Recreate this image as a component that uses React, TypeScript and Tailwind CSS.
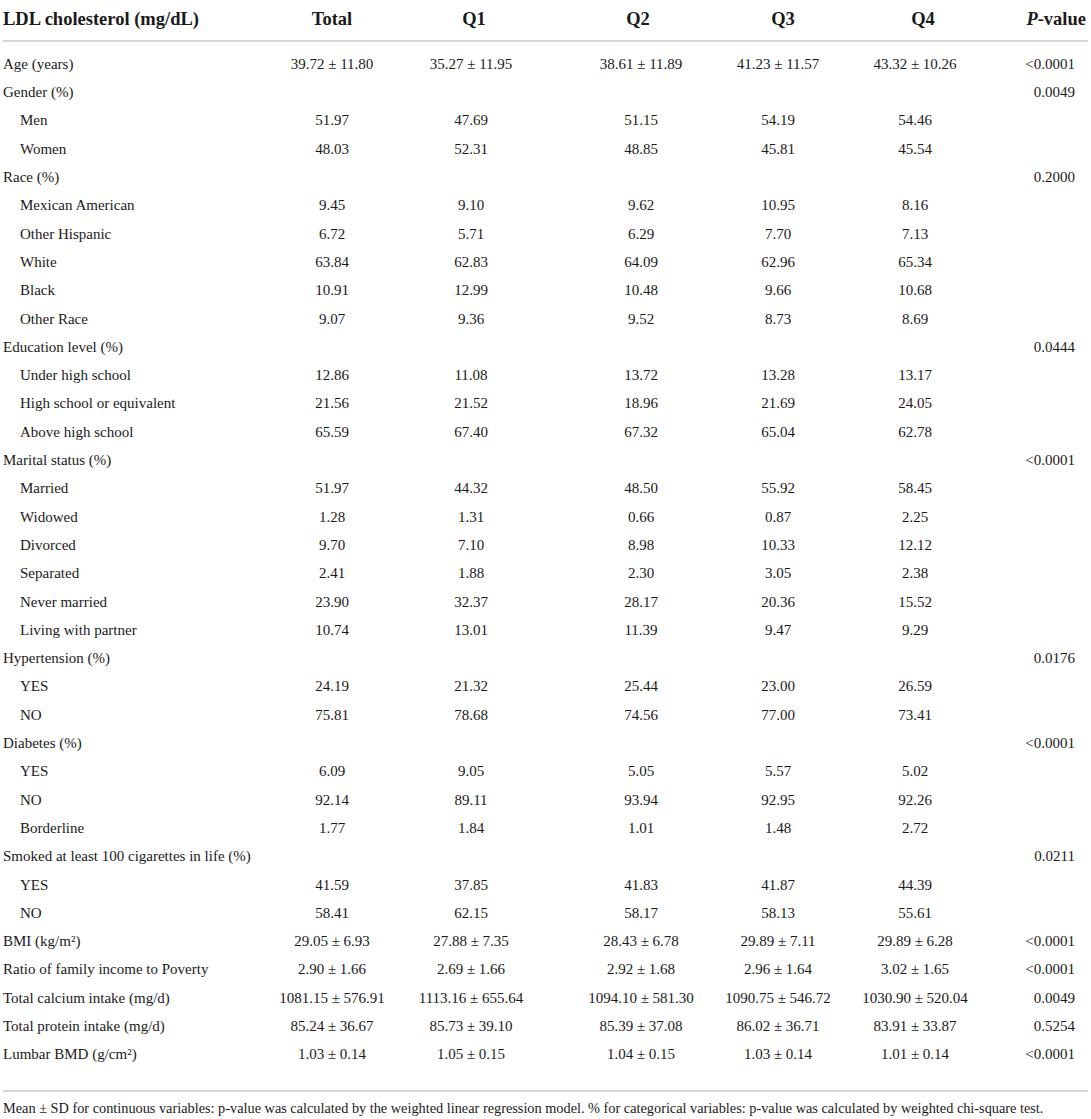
const rows: [string, boolean, string, string, string, string, string, string][] = [
  ["Age (years)", false, "39.72 ± 11.80", "35.27 ± 11.95", "38.61 ± 11.89", "41.23 ± 11.57", "43.32 ± 10.26", "<0.0001"],
  ["Gender (%)", false, "", "", "", "", "", "0.0049"],
  ["Men", true, "51.97", "47.69", "51.15", "54.19", "54.46", ""],
  ["Women", true, "48.03", "52.31", "48.85", "45.81", "45.54", ""],
  ["Race (%)", false, "", "", "", "", "", "0.2000"],
  ["Mexican American", true, "9.45", "9.10", "9.62", "10.95", "8.16", ""],
  ["Other Hispanic", true, "6.72", "5.71", "6.29", "7.70", "7.13", ""],
  ["White", true, "63.84", "62.83", "64.09", "62.96", "65.34", ""],
  ["Black", true, "10.91", "12.99", "10.48", "9.66", "10.68", ""],
  ["Other Race", true, "9.07", "9.36", "9.52", "8.73", "8.69", ""],
  ["Education level (%)", false, "", "", "", "", "", "0.0444"],
  ["Under high school", true, "12.86", "11.08", "13.72", "13.28", "13.17", ""],
  ["High school or equivalent", true, "21.56", "21.52", "18.96", "21.69", "24.05", ""],
  ["Above high school", true, "65.59", "67.40", "67.32", "65.04", "62.78", ""],
  ["Marital status (%)", false, "", "", "", "", "", "<0.0001"],
  ["Married", true, "51.97", "44.32", "48.50", "55.92", "58.45", ""],
  ["Widowed", true, "1.28", "1.31", "0.66", "0.87", "2.25", ""],
  ["Divorced", true, "9.70", "7.10", "8.98", "10.33", "12.12", ""],
  ["Separated", true, "2.41", "1.88", "2.30", "3.05", "2.38", ""],
  ["Never married", true, "23.90", "32.37", "28.17", "20.36", "15.52", ""],
  ["Living with partner", true, "10.74", "13.01", "11.39", "9.47", "9.29", ""],
  ["Hypertension (%)", false, "", "", "", "", "", "0.0176"],
  ["YES", true, "24.19", "21.32", "25.44", "23.00", "26.59", ""],
  ["NO", true, "75.81", "78.68", "74.56", "77.00", "73.41", ""],
  ["Diabetes (%)", false, "", "", "", "", "", "<0.0001"],
  ["YES", true, "6.09", "9.05", "5.05", "5.57", "5.02", ""],
  ["NO", true, "92.14", "89.11", "93.94", "92.95", "92.26", ""],
  ["Borderline", true, "1.77", "1.84", "1.01", "1.48", "2.72", ""],
  ["Smoked at least 100 cigarettes in life (%)", false, "", "", "", "", "", "0.0211"],
  ["YES", true, "41.59", "37.85", "41.83", "41.87", "44.39", ""],
  ["NO", true, "58.41", "62.15", "58.17", "58.13", "55.61", ""],
  ["BMI (kg/m²)", false, "29.05 ± 6.93", "27.88 ± 7.35", "28.43 ± 6.78", "29.89 ± 7.11", "29.89 ± 6.28", "<0.0001"],
  ["Ratio of family income to Poverty", false, "2.90 ± 1.66", "2.69 ± 1.66", "2.92 ± 1.68", "2.96 ± 1.64", "3.02 ± 1.65", "<0.0001"],
  ["Total calcium intake (mg/d)", false, "1081.15 ± 576.91", "1113.16 ± 655.64", "1094.10 ± 581.30", "1090.75 ± 546.72", "1030.90 ± 520.04", "0.0049"],
  ["Total protein intake (mg/d)", false, "85.24 ± 36.67", "85.73 ± 39.10", "85.39 ± 37.08", "86.02 ± 36.71", "83.91 ± 33.87", "0.5254"],
  ["Lumbar BMD (g/cm²)", false, "1.03 ± 0.14", "1.05 ± 0.15", "1.04 ± 0.15", "1.03 ± 0.14", "1.01 ± 0.14", "<0.0001"],
]

const Cell = ({ children }: { children: React.ReactNode }) => (
  <div className="flex justify-center whitespace-nowrap">{children}</div>
)

export default function App() {
  return (
    <div className="w-[1091px] h-[1119px] bg-white text-[#1a1a1a] font-['Liberation_Serif',serif]">
      {/* header */}
      <div className="mx-[3px] border-b-2 border-[#d4d4d4]">
        <div className="grid grid-cols-[259px_140px_144px_184px_106px_174px_76px] h-[40px] items-center text-[18.5px] font-bold">
          <div className="whitespace-nowrap">LDL cholesterol (mg/dL)</div>
          <Cell>Total</Cell>
          <Cell>Q1</Cell>
          <Cell>Q2</Cell>
          <Cell>Q3</Cell>
          <Cell>Q4</Cell>
          <div className="text-right whitespace-nowrap">
            <span className="italic">P</span>-value
          </div>
        </div>
      </div>

      {/* body */}
      <div className="pt-[8px] pb-[21px] mx-[3px] border-b-2 border-[#d4d4d4] text-[15px]">
        {rows.map((r, i) => (
          <div
            key={i}
            className="grid grid-cols-[259px_140px_138px_202px_72px_202px_59px] h-[28.3px] items-center"
          >
            <div className={r[1] ? "pl-[17px] whitespace-nowrap" : "whitespace-nowrap"}>{r[0]}</div>
            <Cell>{r[2]}</Cell>
            <Cell>{r[3]}</Cell>
            <Cell>{r[4]}</Cell>
            <Cell>{r[5]}</Cell>
            <Cell>{r[6]}</Cell>
            <div className="text-right whitespace-nowrap">{r[7]}</div>
          </div>
        ))}
      </div>

      {/* footnote */}
      <div className="px-[3px] pt-[6px] text-[14.3px] whitespace-nowrap">
        Mean ± SD for continuous variables: p-value was calculated by the weighted linear regression model. % for categorical variables: p-value was calculated by weighted chi-square test.
      </div>
    </div>
  )
}
